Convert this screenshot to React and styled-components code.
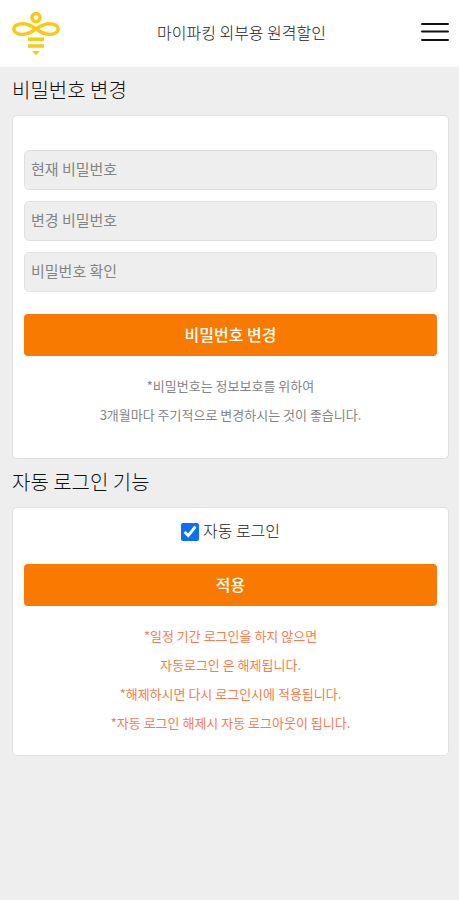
import { useState } from "react";
import styled, { createGlobalStyle } from "styled-components";

const GlobalStyle = createGlobalStyle`
  :root {
    --orange: #f97a00;
    --notice: #f67c4e;
    --gray: #eeeeee;
    --border: #e0e0e0;
    --text: #333333;
    --muted: #848484;
  }

  *,
  *::before,
  *::after {
    box-sizing: border-box;
  }

  body {
    margin: 0;
    background-color: var(--gray);
    color: var(--text);
    font-family: "Noto Sans CJK KR", sans-serif;
    font-size: 16px;
    font-weight: 400;
  }

  button,
  input {
    font-family: inherit;
  }
`;

const StyledHeader = styled.header`
  display: flex;
  justify-content: space-between;
  align-items: center;
  height: 67px;
  padding: 0 10px;
  background-color: #fff;

  .title {
    margin: 0;
    padding-bottom: 3px;
    color: #222;
    font-size: 16px;
    font-weight: 300;
    line-height: 24px;
  }

  .logo {
    display: flex;
  }
`;

const MenuButton = styled.button`
  display: flex;
  padding: 0;
  border: 0;
  background: none;
  cursor: pointer;
`;

const Main = styled.main`
  padding: 0 10px 24px 12px;
`;

const SectionTitle = styled.h2`
  margin: 0;
  padding: 8px 0 10px;
  color: #111;
  font-size: 20px;
  font-weight: 300;
  line-height: 30px;
`;

const Card = styled.div`
  padding: ${({ $padding }) => $padding};
  border: 1px solid var(--border);
  border-radius: 5px;
  background-color: #fff;
`;

const Fields = styled.div`
  display: flex;
  flex-direction: column;
  gap: 11px;
  margin-bottom: 22px;
`;

const Input = styled.input`
  width: 100%;
  height: 40px;
  padding: 0 6px 3px;
  border: 1px solid var(--border);
  border-radius: 5px;
  background-color: var(--gray);
  color: var(--text);
  font-size: 15px;

  &::placeholder {
    color: var(--muted);
  }
`;

const SubmitButton = styled.button`
  display: block;
  width: 100%;
  height: 42px;
  padding: 0 0 3px;
  border: 0;
  border-radius: 4px;
  background-color: var(--orange);
  color: #fff;
  font-size: 16px;
  font-weight: 500;
  line-height: 24px;
  cursor: pointer;
`;

const CheckRow = styled.div`
  display: flex;
  justify-content: center;
  align-items: center;
  gap: 4px;
  margin-bottom: 20px;
  color: #222;
  font-weight: 300;

  input {
    width: 18px;
    height: 18px;
    margin: 0;
    accent-color: #0d6efd;
  }

  label {
    padding-bottom: 3px;
    line-height: 21px;
  }
`;

const Note = styled.p`
  margin: 15px 0 0;
  color: ${({ $notice }) => ($notice ? "var(--notice)" : "var(--muted)")};
  font-size: 13px;
  line-height: 29px;
  text-align: center;

  span {
    display: block;
  }
`;

const passwordFields = [
  { name: "current", label: "현재 비밀번호" },
  { name: "next", label: "변경 비밀번호" },
  { name: "confirm", label: "비밀번호 확인" },
];

const passwordNotes = [
  "*비밀번호는 정보보호를 위하여",
  "3개월마다 주기적으로 변경하시는 것이 좋습니다.",
];

const loginNotes = [
  "*일정 기간 로그인을 하지 않으면",
  "자동로그인 은 해제됩니다.",
  "*해제하시면 다시 로그인시에 적용됩니다.",
  "*자동 로그인 해제시 자동 로그아웃이 됩니다.",
];

const BeeLogo = () => (
  <svg width="52" height="47" viewBox="0 0 52 47" fill="none" aria-hidden="true">
    <g stroke="#fbc914" strokeWidth="3.4">
      <circle cx="26" cy="7.6" r="4.1" />
      <path d="M26 19C21 15.500 17 13.800 12.500 13.800C7.500 13.800 3.800 16 3.800 19C3.800 22 7.500 24.400 12.500 24.400C17 24.400 21 22.500 26 19C31 15.500 35 13.800 39.500 13.800C44.500 13.800 48.200 16 48.200 19C48.200 22 44.500 24.400 39.500 24.400C35 24.400 31 22.500 26 19Z" />
      <path d="M18 29.300H34M18 36H34" />
    </g>
    <path d="M22 41H30L26 45.300Z" fill="#fbc914" />
  </svg>
);

const MenuIcon = () => (
  <svg width="28" height="23" viewBox="0 0 28 23" aria-hidden="true">
    <g fill="#111">
      <rect y="1" width="28" height="2" rx="1" />
      <rect y="8.500" width="28" height="2" rx="1" />
      <rect y="17" width="28" height="2" rx="1" />
    </g>
  </svg>
);

const Header = () => (
  <StyledHeader>
    <a href="#home" className="logo" aria-label="홈">
      <BeeLogo />
    </a>
    <h1 className="title">마이파킹 외부용 원격할인</h1>
    <MenuButton type="button" aria-label="메뉴">
      <MenuIcon />
    </MenuButton>
  </StyledHeader>
);

const Notes = ({ lines, notice }) => (
  <Note $notice={notice}>
    {lines.map((line) => (
      <span key={line}>{line}</span>
    ))}
  </Note>
);

const PasswordForm = () => {
  const [values, setValues] = useState({ current: "", next: "", confirm: "" });

  const handleChange = (e) =>
    setValues({ ...values, [e.target.name]: e.target.value });

  return (
    <Card
      as="form"
      $padding="34px 11px 29px"
      onSubmit={(e) => e.preventDefault()}
    >
      <Fields>
        {passwordFields.map(({ name, label }) => (
          <Input
            key={name}
            type="password"
            name={name}
            placeholder={label}
            aria-label={label}
            value={values[name]}
            onChange={handleChange}
          />
        ))}
      </Fields>
      <SubmitButton type="submit">비밀번호 변경</SubmitButton>
      <Notes lines={passwordNotes} />
    </Card>
  );
};

const AutoLoginForm = () => {
  const [checked, setChecked] = useState(true);

  return (
    <Card
      as="form"
      $padding="12px 11px 18px"
      onSubmit={(e) => e.preventDefault()}
    >
      <CheckRow>
        <input
          id="auto-login"
          type="checkbox"
          checked={checked}
          onChange={(e) => setChecked(e.target.checked)}
        />
        <label htmlFor="auto-login">자동 로그인</label>
      </CheckRow>
      <SubmitButton type="submit">적용</SubmitButton>
      <Notes lines={loginNotes} notice />
    </Card>
  );
};

const App = () => (
  <>
    <GlobalStyle />
    <Header />
    <Main>
      <SectionTitle>비밀번호 변경</SectionTitle>
      <PasswordForm />
      <SectionTitle>자동 로그인 기능</SectionTitle>
      <AutoLoginForm />
    </Main>
  </>
);

export default App;
